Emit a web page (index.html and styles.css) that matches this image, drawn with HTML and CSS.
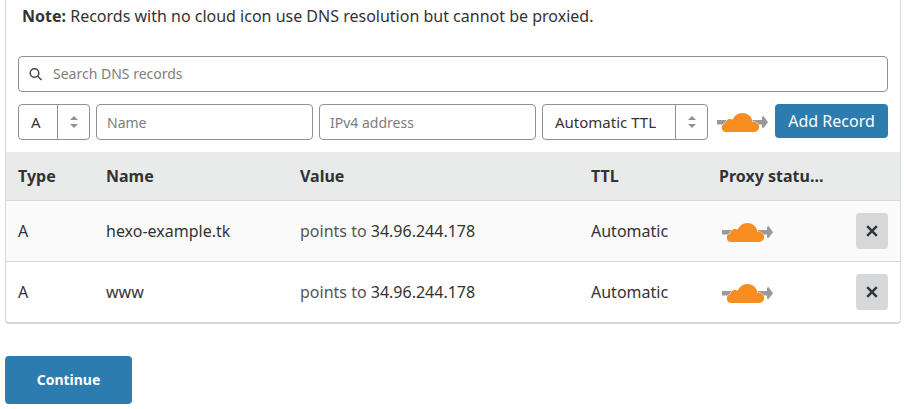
FILE: index.html
```html
<!DOCTYPE html>
<html lang="en">
<head>
<meta charset="utf-8">
<meta name="viewport" content="width=device-width, initial-scale=1">
<title>DNS records</title>
<link rel="stylesheet" href="styles.css">
</head>
<body>
<svg class="sprite" aria-hidden="true">
  <symbol id="cloud" viewBox="0 0 51 20">
    <path fill="#999" d="M0 8h45V5l1.500-1L51 10.300 46.500 16 45 15.500V12.500H0z"/>
    <path class="cloud-shape" d="M9.500 20a4.300 4.300 0 0 1-1.200-8.500C8.300 8.500 11 6.700 13.500 7q1.200.1 2.200.7C17.200 3.800 21 1 25.500 1c5.500 0 9.700 4 10 9.300q.8-.3 1.700-.3a5 5 0 0 1 0 10z"/>
  </symbol>
  <symbol id="sort" viewBox="0 0 8 12">
    <path fill="#8e9296" d="M4 0l4 4H0zM4 12l4-4H0z"/>
  </symbol>
  <symbol id="cross" viewBox="0 0 12 12">
    <path d="M1.200 1.200l9.600 9.600M10.800 1.200l-9.600 9.600" stroke="#333" stroke-width="2.400"/>
  </symbol>
</svg>
<main class="page">
  <section class="card">
    <p class="note"><strong>Note:</strong> Records with no cloud icon use DNS resolution but cannot be proxied.</p>
    <form class="controls">
      <label class="search">
        <svg class="search-icon" viewBox="0 0 14 14" aria-hidden="true"><circle cx="5.500" cy="6" r="4.300"/><path d="M8.500 9l4 4"/></svg>
        <input type="search" placeholder="Search DNS records" aria-label="Search DNS records">
      </label>
      <div class="add-row">
        <div class="select select-type">
          <select aria-label="Type"><option>A</option></select>
          <span class="select-arrows"><svg><use href="#sort"/></svg></span>
        </div>
        <input class="field" type="text" placeholder="Name" aria-label="Name">
        <input class="field" type="text" placeholder="IPv4 address" aria-label="IPv4 address">
        <div class="select select-ttl">
          <select aria-label="TTL"><option>Automatic TTL</option></select>
          <span class="select-arrows"><svg><use href="#sort"/></svg></span>
        </div>
        <button class="proxy-toggle" type="button" aria-label="Proxied"><svg class="cloud"><use href="#cloud"/></svg></button>
        <button class="button add" type="button">Add Record</button>
      </div>
    </form>
    <table class="records">
      <colgroup><col class="col-type"><col class="col-name"><col><col class="col-ttl"><col class="col-proxy"><col class="col-action"></colgroup>
      <thead>
        <tr><th>Type</th><th>Name</th><th>Value</th><th>TTL</th><th>Proxy statu...</th><th></th></tr>
      </thead>
      <tbody>
        <tr>
          <td>A</td><td>hexo-example.tk</td><td><span class="muted">points to</span> 34.96.244.178</td><td>Automatic</td>
          <td class="proxy"><svg class="cloud" role="img" aria-label="Proxied"><use href="#cloud"/></svg></td>
          <td><button class="delete" type="button" aria-label="Delete record"><svg><use href="#cross"/></svg></button></td>
        </tr>
        <tr>
          <td>A</td><td>www</td><td><span class="muted">points to</span> 34.96.244.178</td><td>Automatic</td>
          <td class="proxy"><svg class="cloud" role="img" aria-label="Proxied"><use href="#cloud"/></svg></td>
          <td><button class="delete" type="button" aria-label="Delete record"><svg><use href="#cross"/></svg></button></td>
        </tr>
      </tbody>
    </table>
  </section>
  <button class="button continue" type="button">Continue</button>
</main>
</body>
</html>
```
FILE: styles.css
```css
* { box-sizing: border-box; }

body {
  margin: 0;
  background: #fff;
  color: #333;
  font: 16px/24px "Segoe UI", "Noto Sans", "Open Sans", sans-serif;
}

button, input, select { font: inherit; color: inherit; margin: 0; }
svg { display: block; }
.sprite { position: absolute; width: 0; height: 0; }

.page { padding: 0 3px 4px 5px; }

.card {
  border: 1px solid #d5d7d8;
  border-top: 0;
  border-bottom-width: 2px;
  border-radius: 0 0 4px 4px;
  overflow: hidden;
}

.note { margin: 0; padding: 4px 16px 28px; }

.controls {
  display: flex;
  flex-direction: column;
  gap: 12px;
  padding: 0 12px 12px;
}

.search, .field, .select {
  height: 36px;
  border: 1px solid #8e9296;
  border-radius: 4px;
  background: #fff;
}

.search {
  display: flex;
  align-items: center;
  gap: 10px;
  padding: 0 10px;
}
.search input {
  flex: 1;
  min-width: 0;
  border: 0;
  padding: 0;
  outline: 0;
  background: none;
  appearance: none;
  font-size: 14px;
}
.search-icon {
  width: 14px;
  height: 14px;
  fill: none;
  stroke: #444;
  stroke-width: 1.5;
}
::placeholder { color: #7d7d7d; opacity: 1; }

.add-row { display: flex; gap: 6px; }

.field { flex: 1; min-width: 0; padding: 0 10px; font-size: 14px; }

.select { position: relative; }
.select-type { width: 72px; }
.select-ttl { width: 166px; }
.select select {
  width: 100%;
  height: 100%;
  border: 0;
  padding: 0 34px 0 12px;
  background: none;
  appearance: none;
  font-size: 15px;
}
.select-arrows {
  position: absolute;
  inset: 0 0 0 auto;
  width: 32px;
  display: grid;
  place-items: center;
  border-left: 1px solid #8e9296;
  pointer-events: none;
}
.select-arrows svg { width: 8px; height: 12px; }

.proxy-toggle { border: 0; padding: 0 1px 0 3px; background: none; }
.cloud { width: 51px; height: 20px; }
.cloud-shape { fill: #f78d1e; stroke: #fff; stroke-width: 1; paint-order: stroke; }

.button {
  border: 0;
  border-radius: 4px;
  background: #2c7cb0;
  color: #fff;
}
.add { width: 113px; height: 34px; padding: 0; }
.continue {
  margin-top: 32px;
  width: 127px;
  height: 48px;
  font-size: 14px;
  font-weight: 700;
}

.records { width: 100%; table-layout: fixed; border-collapse: collapse; }
.col-type { width: 88px; }
.col-name { width: 194px; }
.col-ttl { width: 128px; }
.col-proxy { width: 137px; }
.col-action { width: 56px; }
.records th, .records td { padding: 0 12px; text-align: left; white-space: nowrap; }
.records th { height: 48px; background: #e9ebea; font-weight: 700; }
.records td { height: 61px; border-top: 1px solid #d5d7d8; }
.records tbody tr:nth-child(odd) { background: #fafafa; }
.records .proxy { padding: 2px 12px 0 15px; }
.muted { color: #555; }

.delete {
  display: grid;
  place-items: center;
  width: 32px;
  height: 36px;
  border: 0;
  border-radius: 4px;
  padding: 0;
  background: #d5d7d8;
}
.delete svg { width: 12px; height: 12px; }
```
